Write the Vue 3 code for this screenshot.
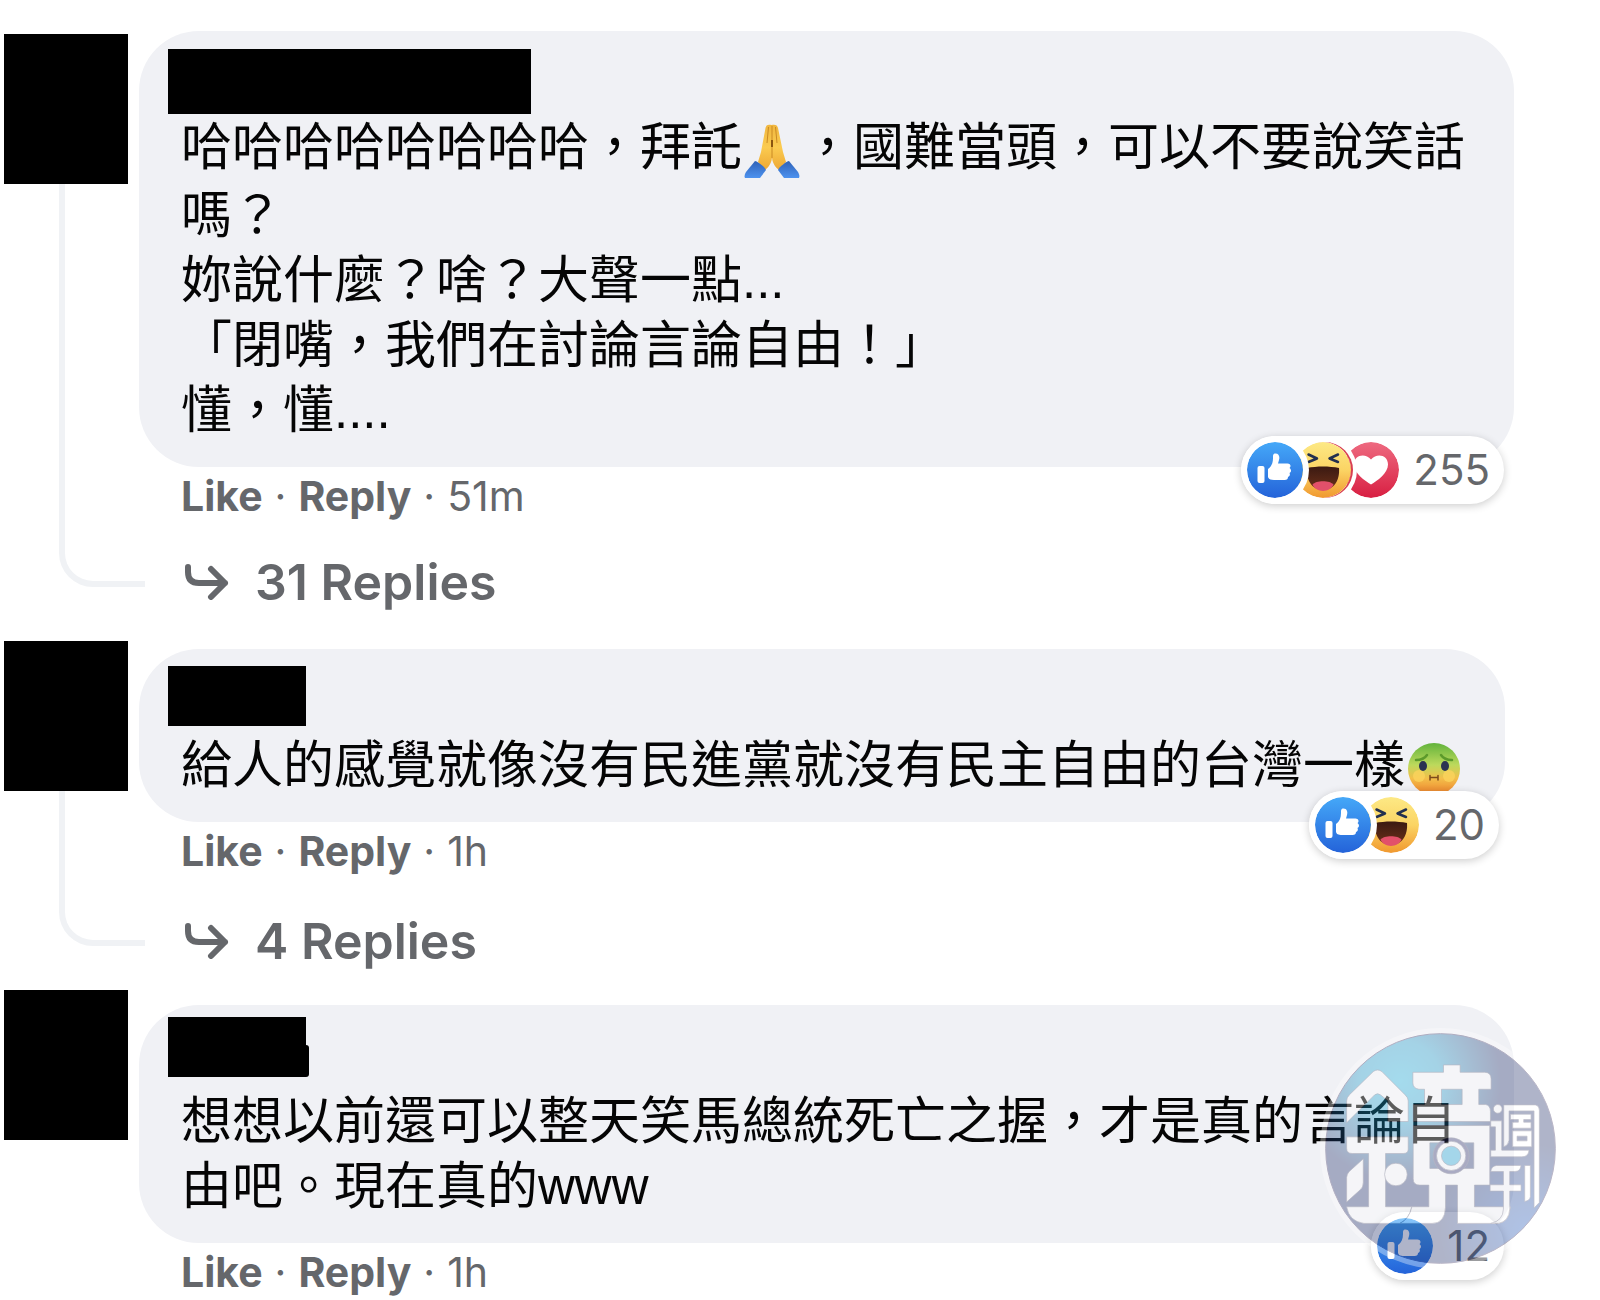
<script setup>
import { ref } from "vue";

const comments = ref([
  {
    id: 1,
    lines: [
      ["哈哈哈哈哈哈哈哈，拜託", { emoji: "pray" }, "，國難當頭，可以不要說笑話", "嗎？"],
      ["妳說什麼？啥？大聲一點..."],
      ["「閉嘴，我們在討論言論自由！」"],
      ["懂，懂...."]
    ],
    time: "51m",
    replies: 31,
    reactions: ["like", "haha", "love"],
    count: 255
  },
  {
    id: 2,
    lines: [["給人的感覺就像沒有民進黨就沒有民主自由的台灣一樣", { emoji: "sick" }]],
    time: "1h",
    replies: 4,
    reactions: ["like", "haha"],
    count: 20
  },
  {
    id: 3,
    lines: [["想想以前還可以整天笑馬總統死亡之握，才是真的言論自由吧。現在真的www"]],
    time: "1h",
    replies: 0,
    reactions: ["like"],
    count: 12,
    stamp: true
  }
])
</script>

<template>
  <!-- shared gradients -->
  <svg class="defs" width="0" height="0" aria-hidden="true">
    <defs>
      <linearGradient id="gLike" x1="0" y1="0" x2="0" y2="1">
        <stop offset="0" stop-color="#45a8f8" />
        <stop offset="1" stop-color="#2463d9" />
      </linearGradient>
      <linearGradient id="gFace" x1="0" y1="0" x2="0" y2="1">
        <stop offset="0" stop-color="#fde985" />
        <stop offset="0.5" stop-color="#fbd464" />
        <stop offset="1" stop-color="#f0982f" />
      </linearGradient>
      <linearGradient id="gMouth" x1="0" y1="0" x2="0" y2="1">
        <stop offset="0" stop-color="#3b1a12" />
        <stop offset="1" stop-color="#6b3019" />
      </linearGradient>
      <linearGradient id="gLove" x1="0" y1="0" x2="0" y2="1">
        <stop offset="0" stop-color="#ee6a80" />
        <stop offset="1" stop-color="#d81f42" />
      </linearGradient>
      <linearGradient id="gSick" x1="0" y1="0" x2="0" y2="1">
        <stop offset="0" stop-color="#62b33c" />
        <stop offset="0.42" stop-color="#bcd95c" />
        <stop offset="0.68" stop-color="#f3bf4a" />
        <stop offset="1" stop-color="#ee7f2c" />
      </linearGradient>
      <linearGradient id="gHand" x1="0" y1="0" x2="0" y2="1">
        <stop offset="0" stop-color="#f0b63e" />
        <stop offset="0.5" stop-color="#fbcb50" />
        <stop offset="1" stop-color="#eda834" />
      </linearGradient>
      <linearGradient id="gSleeve" x1="0" y1="0" x2="0" y2="1">
        <stop offset="0" stop-color="#2f62b8" />
        <stop offset="1" stop-color="#4d92ef" />
      </linearGradient>
      <radialGradient id="gDisk" gradientUnits="userSpaceOnUse" cx="300" cy="240" r="300">
        <stop offset="0" stop-color="#18b4e0" />
        <stop offset="0.4" stop-color="#1a9ccc" />
        <stop offset="1" stop-color="#1c2c68" />
      </radialGradient>
      <radialGradient id="gGlow" gradientUnits="userSpaceOnUse" cx="680" cy="690" r="260">
        <stop offset="0" stop-color="#1e60d0" stop-opacity="0.8" />
        <stop offset="1" stop-color="#1e60d0" stop-opacity="0" />
      </radialGradient>
    </defs>
  </svg>

  <main class="thread">
    <article v-for="comment in comments" :key="comment.id" class="comment" :class="'comment-' + comment.id">
      <div class="side">
        <div class="avatar"></div>
        <div v-if="comment.replies" class="connector"></div>
      </div>

      <div class="main">
        <div class="bubble">
          <div class="nameRow"><span class="name"></span></div>
          <p v-for="(line, i) in comment.lines" :key="i" class="line">
            <template v-for="(part, j) in line" :key="j">
              <svg v-if="part.emoji === 'pray'" class="emoji pray" viewBox="0 0 56 56" role="img" aria-label="🙏">
                <path fill="url(#gHand)" d="M27.500 2 C24 1 22 2 21.500 5 L17 29 L14 39 L21 47 C25 44 28 39 28 34 C28 39 31 44 35 47 L42 39 L39 29 L34 5 C33.500 2 31 1 27.500 2 Z" />
                <path fill="none" stroke="#c98a24" stroke-width="1" d="M28 3 V35 M24.500 4 L23 20 M31.500 4 L33 20" />
                <path fill="none" stroke="#8a5510" stroke-width="2" d="M28 17 V24" />
                <path fill="url(#gSleeve)" d="M11 38 C13 38 21 44 22 47 L16 55 H1 C0 53 1 51 2 49 Z" />
                <path fill="url(#gSleeve)" d="M45 38 C43 38 35 44 34 47 L40 55 H55 C56 53 55 51 54 49 Z" />
              </svg>
              <svg v-else-if="part.emoji === 'sick'" class="emoji" viewBox="0 0 56 56" role="img" aria-label="🤢">
                <circle cx="28" cy="28" r="26" fill="url(#gSick)" />
                <circle cx="13" cy="35" r="6" fill="#fbd35c" opacity="0.8" />
                <circle cx="43" cy="35" r="6" fill="#fbd35c" opacity="0.8" />
                <ellipse cx="17" cy="25" rx="4" ry="5" fill="#2b3252" />
                <ellipse cx="39" cy="25" rx="4" ry="5" fill="#2b3252" />
                <path fill="none" stroke="#5c9a2b" stroke-width="2.500" stroke-linecap="round" d="M10 19 C15 19 19 17 21 14 M46 19 C41 19 37 17 35 14" />
                <path fill="none" stroke="#7c4a1c" stroke-width="1.500" stroke-linecap="round" d="M24 36.500 H32 M24 34.500 V39 M32 34.500 V39" />
              </svg>
              <template v-else>{{ part }}</template>
            </template>
          </p>

          <button type="button" class="reactions" :aria-label="comment.count + ' reactions'">
            <span class="icons">
              <template v-for="kind in comment.reactions" :key="kind">
                <svg v-if="kind === 'like'" class="icon like" viewBox="0 0 56 56">
                  <circle cx="28" cy="28" r="28" fill="url(#gLike)" />
                  <rect x="10.500" y="24" width="7" height="17" rx="2" fill="#fff" />
                  <path fill="#fff" d="M21 27 C24.500 24.500 26 21 26 16 C26 13 26 11.500 28.500 11.500 C32 11.500 33 15 32 18 L31 21.500 H40.500 C43.500 21.500 44.500 24.500 42.500 26 C44.500 27.500 44.500 30 42.500 31 C43.500 33 42.500 34.500 41 35 C41 37 40 38 37.500 38 H27 C23.500 38 21 37 21 34.500 Z" />
                </svg>
                <svg v-else-if="kind === 'haha'" class="icon haha" viewBox="0 0 56 56">
                  <circle cx="28" cy="28" r="28" fill="url(#gFace)" />
                  <path fill="none" stroke="#23304f" stroke-width="2.500" stroke-linecap="round" stroke-linejoin="round" d="M13.500 12.500 L22 16.500 L13.500 20 M43 12.500 L34.500 16.500 L43 20" />
                  <path fill="url(#gMouth)" d="M12 26 C22 24 34 24 44 26 C45 38 39 48 28 48 C17 48 11 38 12 26 Z" />
                  <path fill="#e2506a" d="M17.500 42.500 C21 38 35 38 38.500 42.500 C35 51 21 51 17.500 42.500 Z" />
                </svg>
                <svg v-else class="icon" viewBox="0 0 56 56">
                  <circle cx="28" cy="28" r="28" fill="url(#gLove)" />
                  <path fill="#fff" d="M28 42.500 C22 39 11 31 11 22.500 C11 13 22 10.500 28 17.500 C34 10.500 45 13 45 22.500 C45 31 34 39 28 42.500 Z" />
                </svg>
              </template>
            </span>
            <span class="count">{{ comment.count }}</span>
          </button>

          <svg v-if="comment.stamp" class="stamp" viewBox="58 81 724 724" role="img" aria-label="鏡週刊">
            <circle cx="420" cy="443" r="362" fill="#fff" />
            <circle cx="420" cy="443" r="345" fill="url(#gDisk)" />
            <circle cx="420" cy="443" r="345" fill="url(#gGlow)" stroke="#3a2f60" stroke-width="3" />
            <g fill="#fff" stroke="#4c4a66" stroke-width="2">
              <path d="M138 366 V300 Q138 290 146 282 L218 212 Q231 202 244 212 L314 282 Q323 290 323 300 V362 H262 V300 L240 282 Q231 275 222 282 Z" />
              <path d="M138 408 H323 V445 Q323 458 308 458 H255 V618 H334 Q326 655 298 668 H190 Q145 662 138 618 H204 V458 H155 Q138 458 138 442 Z" />
              <path d="M188 474 V545 Q188 560 178 568 L138 604 V530 Q138 520 146 512 Z" />
              <circle cx="286" cy="521" r="34" />
              <path d="M429 192 H479 V214 H552 Q572 214 572 234 V265 H535 V311 H556 Q570 314 570 332 V362 H338 V311 H372 V265 H355 Q337 262 337 246 V214 H429 Z M423 265 V311 H485 V265 Z" fill-rule="evenodd" />
              <path d="M338 374 H568 V553 H522 V618 H630 Q626 668 590 668 H471 V553 H435 V620 Q433 668 395 668 H298 Q326 655 334 618 H385 V553 H358 Q338 553 338 534 Z M388 426 V503 H520 V426 Z" fill-rule="evenodd" />
              <circle cx="452" cy="465" r="54" fill="#292a68" />
              <circle cx="452" cy="465" r="44" />
              <circle cx="452" cy="465" r="29" fill="#18a6d8" />
              <!-- small marks on the right -->
              <circle cx="592" cy="324" r="13" />
              <path d="M571 360 H604 V448 H686 Q684 468 664 468 H571 V448 H585 V378 H571 Z" />
              <path d="M610 312 H705 Q717 314 717 328 V605 L701 622 V330 H626 V418 Q624 434 610 438 Z" />
              <path d="M630 340 H692 V356 H670 V364 H692 V382 H636 V364 H654 V356 H630 Z" />
              <path d="M636 390 H694 V438 H636 Z M650 406 V420 H680 V406 Z" fill-rule="evenodd" />
              <path d="M588 494 H662 Q660 512 644 512 H628 V552 H662 V571 H628 V625 Q626 662 594 668 H571 Q608 660 609 625 V571 H569 V552 H609 V512 H571 Q573 496 588 494 Z" />
              <path d="M673 494 H690 V588 Q688 600 673 602 Z" />
            </g>
            <path fill="none" stroke="#fff" stroke-width="12" opacity="0.700" d="M238 745 Q300 785 370 792" />
          </svg>
        </div>

        <div class="actions">
          <a href="#" class="action">Like</a>
          <span class="dot">·</span>
          <a href="#" class="action">Reply</a>
          <span class="dot">·</span>
          <a href="#" class="time">{{ comment.time }}</a>
        </div>

        <button v-if="comment.replies" type="button" class="replies">
          <svg class="arrow" viewBox="0 0 44 36" aria-hidden="true">
            <path fill="none" stroke="#65676b" stroke-width="6" stroke-linecap="round" stroke-linejoin="round" d="M3 3 V8 Q3 19 14 19 H40 M26 5 L40 19 L26 33" />
          </svg>
          {{ comment.replies }} Replies
        </button>
      </div>
    </article>
  </main>
</template>

<style>
body {
  margin: 0;
  background: #fff;
}
</style>

<style scoped>
.defs {
  position: absolute;
}

.thread {
  padding: 31px 86px 0 4px;
  font-family: Inter, "Noto Sans CJK TC", sans-serif;
  color: #050505;
}

.comment {
  display: flex;
}

.comment-2 {
  margin-top: 30px;
}

.comment-3 {
  margin-top: 20px;
}

.side {
  display: flex;
  flex-direction: column;
  flex: none;
  width: 135px;
  padding-bottom: 24px;
}

.comment-1 .side {
  padding-top: 3px;
}

.avatar {
  width: 124px;
  height: 150px;
  background: #000;
}

.connector {
  flex: 1;
  box-sizing: border-box;
  margin-left: 55px;
  margin-right: -6px;
  border-left: 6px solid #f0f2f5;
  border-bottom: 6px solid #f0f2f5;
  border-bottom-left-radius: 34px;
}

.main {
  flex: 1;
  display: flex;
  flex-direction: column;
  align-items: flex-start;
  min-width: 0;
}

.comment-2 .main {
  padding-top: 8px;
}

.comment-3 .main {
  padding-top: 15px;
}

.bubble {
  position: relative;
  padding: 0 42px 24px;
  background: #f0f1f5;
  border-radius: 60px;
}

.nameRow {
  display: flex;
  height: 84px;
  margin-left: -13px;
}

.name {
  position: relative;
  width: 138px;
  height: 60px;
  margin-top: 17px;
  background: #000;
}

.comment-1 .name {
  width: 363px;
  height: 65px;
  margin-top: 18px;
}

.comment-3 .name {
  margin-top: 12px;
}

/* stroke that sticks out of the covered name */
.comment-3 .name::after {
  content: "";
  position: absolute;
  right: -3px;
  bottom: 0;
  width: 6px;
  height: 32px;
  background: #000;
  border-radius: 0 3px 3px 0;
}

.line {
  margin: 0;
  font-family: "Liberation Sans", "Noto Sans CJK TC", sans-serif;
  font-size: 51px;
  line-height: 65px;
}

.emoji {
  width: 56px;
  height: 56px;
  margin: 0 1px;
  vertical-align: -14px;
}

.pray {
  margin: 0 2px 4px;
  vertical-align: -18px;
}

.reactions {
  position: absolute;
  right: 10px;
  bottom: -37px;
  display: flex;
  align-items: center;
  gap: 14px;
  height: 68px;
  padding: 0 14px 0 6px;
  border: 0;
  border-radius: 34px;
  background: #fff;
  box-shadow: 0 2px 8px rgba(0, 0, 0, 0.2);
  font-family: inherit;
}

.comment-2 .reactions {
  right: 6px;
}

.icons {
  display: flex;
}

.icon {
  position: relative;
  width: 56px;
  height: 56px;
  border-radius: 50%;
}

.icon + .icon {
  margin-left: -8px;
}

.like {
  z-index: 2;
  box-shadow: 0 0 0 6px #fff;
}

.haha {
  z-index: 1;
  box-shadow: 2px 0 0 #d94052, 0 0 0 6px #fff;
}

.haha:last-child {
  box-shadow: none;
}

.count {
  font-size: 42px;
  line-height: 48px;
  color: #65676b;
}

.stamp {
  position: absolute;
  z-index: 3;
  top: 23px;
  right: -47px;
  width: 241px;
  height: 241px;
  opacity: 0.35;
  pointer-events: none;
}

.actions {
  display: flex;
  gap: 12px;
  margin: 5px 0 0 42px;
  font-size: 41px;
  line-height: 48px;
  color: #65676b;
}

.actions a {
  color: inherit;
  text-decoration: none;
}

.action {
  font-weight: 700;
}

.replies {
  display: flex;
  align-items: center;
  gap: 26px;
  height: 58px;
  margin: 33px 0 0 46px;
  padding: 0;
  border: 0;
  background: none;
  font-family: inherit;
  font-size: 50px;
  font-weight: 600;
  line-height: 58px;
  color: #65676b;
}

.comment-2 .replies {
  margin-top: 37px;
}

.arrow {
  width: 44px;
  height: 36px;
}
</style>
